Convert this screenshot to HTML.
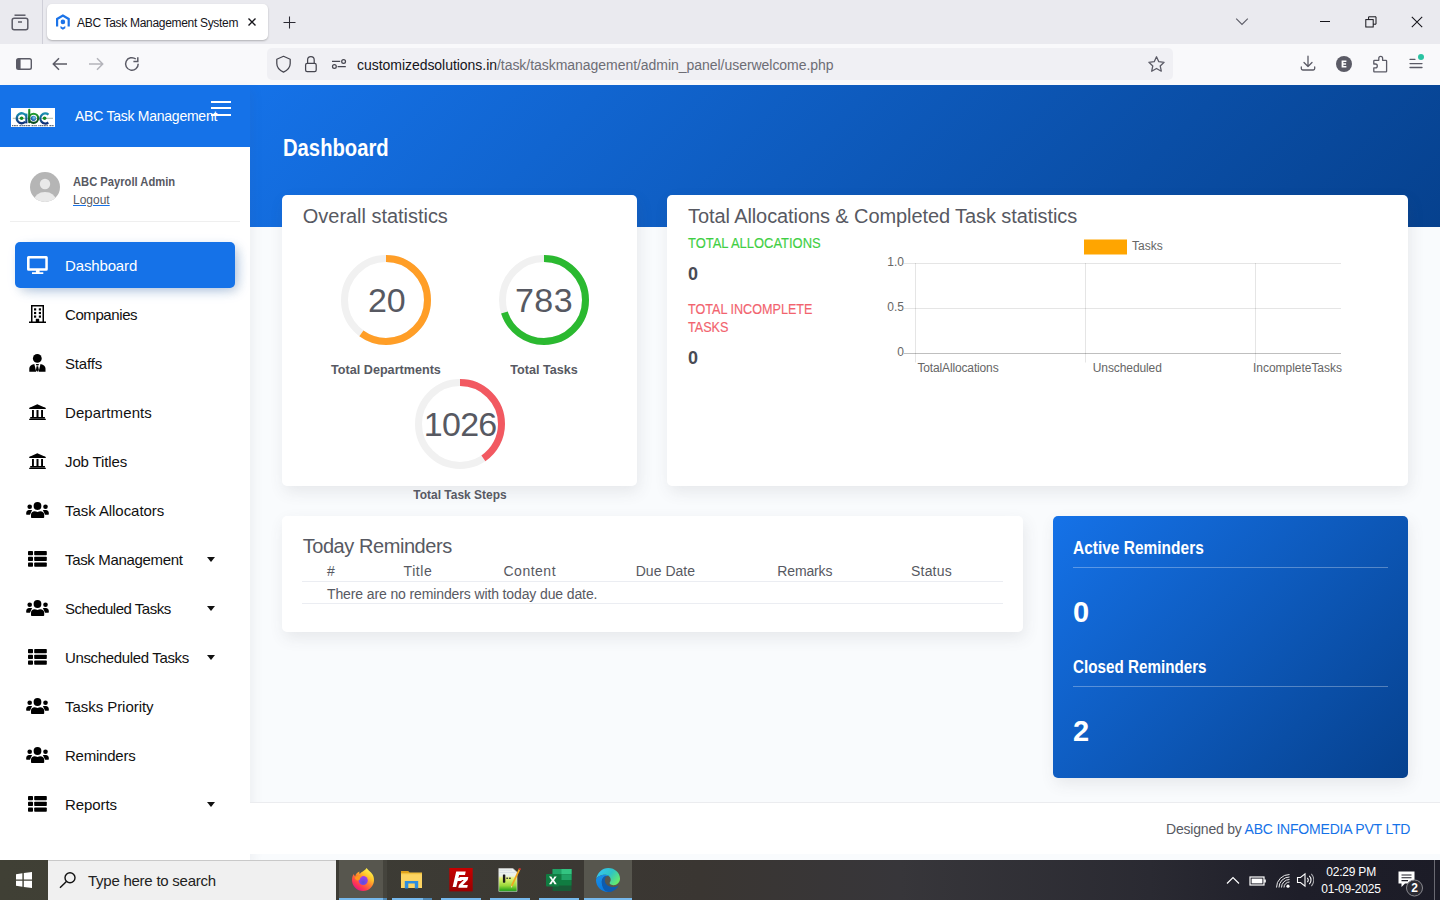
<!DOCTYPE html>
<html><head><meta charset="utf-8"><title>ABC Task Management System</title>
<style>
*{box-sizing:border-box;margin:0;padding:0}
html,body{width:1440px;height:900px;overflow:hidden;font-family:"Liberation Sans",sans-serif;background:#f9fbfd}
.abs{position:absolute}
svg{display:block}
/* browser chrome */
#tabbar{position:absolute;left:0;top:0;width:1440px;height:44px;background:#eaeaef}
#toolbar{position:absolute;left:0;top:44px;width:1440px;height:41px;background:#f9f9fb}
.tab{position:absolute;left:47px;top:4px;width:221px;height:36px;background:#fff;border-radius:5px;box-shadow:0 1px 2px rgba(0,0,0,.25)}
.tabtitle{position:absolute;left:77px;top:16px;font-size:12px;color:#15141a;white-space:nowrap;letter-spacing:-0.31px}
.urlbar{position:absolute;left:267px;top:48px;width:906px;height:32px;background:#f0f0f4;border-radius:5px}
.url{position:absolute;left:357px;top:57px;font-size:14px;color:#15141a;white-space:nowrap;letter-spacing:-0.04px}
.url span{color:#6d6d75}
/* page */
#page{position:absolute;left:0;top:85px;width:1440px;height:775px;background:#f9fbfd}
#sidebar{position:absolute;left:0;top:85px;width:250px;height:775px;background:#fff;box-shadow:4px 4px 10px rgba(69,65,78,.06)}
#logohdr{position:absolute;left:0;top:85px;width:250px;height:62px;background:#1572e8}
#panelhdr{position:absolute;left:250px;top:85px;width:1190px;height:142px;background:linear-gradient(-45deg,#06418e,#1572e8)}
.navi{position:absolute;left:0;width:250px;height:46px}
.navi .ic{position:absolute;left:26px;top:12px;width:22px;height:20px}
.navi .tx{position:absolute;left:65px;top:14px;font-size:15px;color:#111;white-space:nowrap;letter-spacing:-0.25px}
.navi .caret{position:absolute;left:206px;top:21px;width:0;height:0;border-left:5px solid transparent;border-right:5px solid transparent;border-top:5px solid #111}
.card{position:absolute;background:#fff;border-radius:5px;box-shadow:2px 6px 15px 0 rgba(69,65,78,.1)}
.ctitle{position:absolute;font-size:20px;color:#575962;white-space:nowrap;letter-spacing:-0.3px}
</style></head>
<body>
<!-- TAB BAR -->
<div id="tabbar"></div>
<div class="abs" style="left:42px;top:0;width:1px;height:44px;background:#cfcfd8"></div>
<svg class="abs" style="left:10px;top:12px" width="20" height="20" viewBox="0 0 20 20" fill="none" stroke="#5b5b66" stroke-width="1.5"><path d="M4.5 3.2h11"/><rect x="2.2" y="6.2" width="15.6" height="11.6" rx="2"/><path d="M8 10h4"/></svg>
<div class="tab"></div>
<svg class="abs" style="left:55px;top:13px" width="16" height="18" viewBox="0 0 16 18"><path d="M2.1 13.6V6L7.9 2.6L13.7 6V13.6" fill="none" stroke="#1b73e8" stroke-width="2.2"/><circle cx="7.9" cy="8.9" r="2.3" fill="#1b73e8"/><path d="M5.5 13.1L7.9 14.6L10.3 13.1V15.3L7.9 16.8L5.5 15.3Z" fill="#1b73e8"/></svg>
<div class="tabtitle">ABC Task Management System</div>
<svg class="abs" style="left:246px;top:16px" width="12" height="12" viewBox="0 0 12 12" stroke="#15141a" stroke-width="1.4"><path d="M2.5 2.5L9.5 9.5M9.5 2.5L2.5 9.5"/></svg>
<svg class="abs" style="left:282px;top:15px" width="15" height="15" viewBox="0 0 15 15" stroke="#2b2a33" stroke-width="1.05"><path d="M7.5 1.5v12M1.5 7.5h12"/></svg>
<svg class="abs" style="left:1234px;top:15px" width="16" height="12" viewBox="0 0 16 12" fill="none" stroke="#5b5b66" stroke-width="1.1"><path d="M2.2 3.6L8 9.4L13.8 3.6"/></svg>
<div class="abs" style="left:1320px;top:21px;width:10px;height:1px;background:#15141a"></div>
<svg class="abs" style="left:1365px;top:16px" width="12" height="12" viewBox="0 0 12 12" fill="none" stroke="#15141a" stroke-width="1"><rect x="0.8" y="3.6" width="7.4" height="7.4"/><path d="M3.6 3.6V0.8H11V8.2H8.2"/></svg>
<svg class="abs" style="left:1411px;top:16px" width="12" height="12" viewBox="0 0 12 12" stroke="#15141a" stroke-width="1.05"><path d="M0.8 0.8l10.4 10.4M11.2 0.8L0.8 11.2"/></svg>
<!-- TOOLBAR -->
<div id="toolbar"></div>
<svg class="abs" style="left:14px;top:55px" width="20" height="18" viewBox="0 0 20 18" fill="none"><rect x="2.7" y="3.7" width="14.6" height="10.6" rx="1.8" stroke="#5b5b66" stroke-width="1.4"/><rect x="3" y="4" width="3.6" height="10" fill="#5b5b66"/></svg>
<svg class="abs" style="left:50px;top:55px" width="20" height="18" viewBox="0 0 20 18" fill="none" stroke="#5b5b66" stroke-width="1.5"><path d="M17 9H3.5M9 3.3L3.3 9L9 14.7"/></svg>
<svg class="abs" style="left:86px;top:55px" width="20" height="18" viewBox="0 0 20 18" fill="none" stroke="#b4b4ba" stroke-width="1.5"><path d="M3 9h13.5M11 3.3L16.7 9L11 14.7"/></svg>
<svg class="abs" style="left:122px;top:54px" width="20" height="20" viewBox="0 0 20 20" fill="none" stroke="#5b5b66" stroke-width="1.5"><path d="M16.2 9.8A6.3 6.3 0 1 1 13.8 5"/><path d="M15.8 3.2v4.4h-4.4" stroke-linejoin="miter"/></svg>
<div class="urlbar"></div>
<svg class="abs" style="left:274px;top:55px" width="19" height="19" viewBox="0 0 19 19" fill="none" stroke="#45454f" stroke-width="1.25" stroke-linejoin="round"><path d="M9.5 1.3L16.2 4.2V8.5c0 3.8-2.8 6.8-6.7 8.6C5.6 15.3 2.8 12.3 2.8 8.5V4.2Z"/></svg>
<svg class="abs" style="left:302px;top:55px" width="18" height="19" viewBox="0 0 18 19" fill="none" stroke="#45454f" stroke-width="1.25"><rect x="3.6" y="8.3" width="10.6" height="8.3" rx="1.6"/><path d="M5.6 8.3V4.9a3.3 3.3 0 0 1 6.6 0v3.4"/></svg>
<svg class="abs" style="left:330px;top:56px" width="18" height="16" viewBox="0 0 18 16" fill="none" stroke="#45454f" stroke-width="1.25"><path d="M2 5.4h8.2M7.6 10.5h8.2"/><circle cx="13.6" cy="5.4" r="1.9"/><circle cx="4.4" cy="10.5" r="1.9"/></svg>
<div class="url">customizedsolutions.in<span>/task/taskmanagement/admin_panel/userwelcome.php</span></div>
<svg class="abs" style="left:1147px;top:55px" width="19" height="19" viewBox="0 0 19 19" fill="none" stroke="#5b5b66" stroke-width="1.3" stroke-linejoin="round"><path d="M9.5 1.8l2.3 4.9 5.3.6-3.9 3.6 1.1 5.3-4.8-2.7-4.8 2.7 1.1-5.3-3.9-3.6 5.3-.6Z"/></svg>
<svg class="abs" style="left:1299px;top:54px" width="18" height="18" viewBox="0 0 18 18" fill="none" stroke="#5b5b66" stroke-width="1.3" stroke-linecap="round" stroke-linejoin="round"><path d="M9 2.2v10.3M5 8.5l4 4 4-4M2.3 13v1.6a1.4 1.4 0 0 0 1.4 1.4h10.6a1.4 1.4 0 0 0 1.4-1.4V13"/></svg>
<svg class="abs" style="left:1335px;top:55px" width="18" height="18" viewBox="0 0 18 18"><circle cx="9" cy="9" r="8" fill="#5b5b66"/><path d="M6.6 5.4h4.8v1.6H8.4v1.2h2.7v1.5H8.4v1.3h3v1.6H6.6Z" fill="#fff"/></svg>
<svg class="abs" style="left:1372px;top:55px" width="17" height="18" viewBox="0 0 17 18" fill="none" stroke="#5b5b66" stroke-width="1.3" stroke-linejoin="round"><path d="M2.5 5.3h4.3V3.2a1.9 1.9 0 0 1 3.8 0v2.1h3.3c.5 0 .7.2.7.7v10.2c0 .5-.2.7-.7.7H2.5c-.5 0-.7-.2-.7-.7v-3.4h1.6a1.9 1.9 0 0 0 0-3.8H1.8V6c0-.5.2-.7.7-.7Z"/></svg>
<svg class="abs" style="left:1406px;top:52px" width="22" height="22" viewBox="0 0 22 22" fill="none" stroke="#5b5b66" stroke-width="1.3" stroke-linecap="round"><path d="M4 7.3h5M4 11.6h12M4 15.5h12"/><circle cx="15" cy="4.9" r="3" fill="#2ac3a2" stroke="none"/></svg>

<!-- PAGE -->
<div id="page"></div>
<div id="panelhdr"></div>
<div id="sidebar"></div>
<div id="logohdr"></div>
<!-- logo -->
<svg class="abs" style="left:11px;top:108px" width="44" height="19" viewBox="0 0 44 19"><defs><linearGradient id="lgt" x1="0" y1="0" x2="0" y2="1"><stop offset="0" stop-color="#1a8fb0"/><stop offset="1" stop-color="#0d2f78"/></linearGradient><linearGradient id="lgg" x1="0" y1="0" x2="0" y2="1"><stop offset="0" stop-color="#1e9a2e"/><stop offset="1" stop-color="#0c4a1e"/></linearGradient><radialGradient id="lgb" cx=".6" cy=".4" r=".6"><stop offset="0" stop-color="#7fd8f5"/><stop offset="1" stop-color="#0d4da0"/></radialGradient></defs>
<rect width="44" height="19" fill="#fff"/>
<path d="M1.8 10.3H42" stroke="#8a9a80" stroke-width="0.7"/>
<path d="M15.3 8.2A5 5 0 1 0 14.3 13.8" fill="none" stroke="url(#lgt)" stroke-width="2.3"/><rect x="14.3" y="5.6" width="2.1" height="9.8" fill="url(#lgt)"/>
<circle cx="10.6" cy="10.3" r="1.8" fill="#12891f"/>
<rect x="17.2" y="0.8" width="2.1" height="14.4" rx=".9" fill="url(#lgg)"/><circle cx="22.6" cy="10.3" r="4.6" fill="none" stroke="url(#lgg)" stroke-width="2.1"/>
<circle cx="22.5" cy="10.3" r="2.6" fill="url(#lgb)"/>
<path d="M37.5 6.6A5 5 0 1 0 37.3 14.5" fill="none" stroke="url(#lgt)" stroke-width="2.3"/>
<circle cx="33.6" cy="10.3" r="1.8" fill="#12891f"/>
<path d="M1 17.6H43" stroke="#2a3a50" stroke-width="1.2" stroke-dasharray="1.2 .6 2 .6 1.5 1.5 2 .5 1 .5 2 .6 1.5 .6 2 1.5 1.5 .5 1.2 .5 1.5 1.5 1.2 .5 1.5 .5" opacity=".75"/></svg>
<div class="abs" style="left:75px;top:109px;font-size:14px;line-height:1;color:#fff;white-space:nowrap;letter-spacing:-0.25px">ABC Task Management</div>
<div class="abs" style="left:211px;top:100.5px;width:20px;height:2px;background:#fff"></div>
<div class="abs" style="left:211px;top:106.8px;width:20px;height:2px;background:#fff"></div>
<div class="abs" style="left:211px;top:114px;width:20px;height:2px;background:#fff"></div>
<!-- user -->
<svg class="abs" style="left:30px;top:172px" width="30" height="30" viewBox="0 0 30 30"><defs><clipPath id="avc"><circle cx="15" cy="15" r="15"/></clipPath></defs><circle cx="15" cy="15" r="15" fill="#b5b5b5"/><g clip-path="url(#avc)" fill="#e9e9e9"><circle cx="15" cy="12" r="5.2"/><ellipse cx="15" cy="28.5" rx="11" ry="8.5"/></g></svg>
<div class="abs" style="left:73px;top:174.8px;font-size:13px;line-height:1;font-weight:bold;color:#575962;white-space:nowrap;transform:scaleX(0.86);transform-origin:0 0">ABC Payroll Admin</div>
<div class="abs" style="left:73px;top:194.1px;font-size:12px;line-height:1;color:#575962;white-space:nowrap;text-decoration:underline;text-decoration-color:#1572e8">Logout</div>
<div class="abs" style="left:10px;top:221px;width:230px;height:1px;background:#efefef"></div>
<!-- active nav -->
<div class="abs" style="left:15px;top:242px;width:220px;height:46px;background:#1572e8;border-radius:5px;box-shadow:4px 4px 10px 0 rgba(0,0,0,.1),4px 4px 15px -5px rgba(21,114,232,.4)"></div>
<svg class="abs" style="left:27px;top:256px" width="21" height="19" viewBox="0 0 21 19"><path fill="#fff" fill-rule="evenodd" d="M1.5 0h17.8A1.5 1.5 0 0 1 20.8 1.5V13.2A1.5 1.5 0 0 1 19.3 14.7H12.6V16.3H16.3V18H5V16.3H8.9V14.7H1.5A1.5 1.5 0 0 1 0 13.2V1.5A1.5 1.5 0 0 1 1.5 0ZM2.6 2.6V12.3H18.3V2.6Z"/></svg>
<div class="abs" style="left:65px;top:257.9px;font-size:15px;line-height:1;color:#fff;white-space:nowrap;letter-spacing:-0.14px">Dashboard</div>
<svg class="abs" style="left:29px;top:305px" width="17" height="18" viewBox="0 0 17 18"><path fill="#000" fill-rule="evenodd" d="M2 0h13v16.6h2V18H0v-1.4h2ZM3.5 1.5v15.1h3.3v-2.8h3.4v2.8h3.3V1.5Z"/><g fill="#000"><rect x="5" y="3.3" width="2.2" height="2.2"/><rect x="9.8" y="3.3" width="2.2" height="2.2"/><rect x="5" y="6.9" width="2.2" height="2.2"/><rect x="9.8" y="6.9" width="2.2" height="2.2"/><rect x="5" y="10.5" width="2.2" height="2.2"/><rect x="9.8" y="10.5" width="2.2" height="2.2"/></g></svg>
<div class="abs" style="left:65px;top:306.9px;font-size:15px;line-height:1;color:#111;white-space:nowrap;letter-spacing:-0.41px">Companies</div>
<svg class="abs" style="left:29px;top:354px" width="17" height="18" viewBox="0 0 17 18"><g fill="#000"><circle cx="8.3" cy="4.4" r="4.4"/><path d="M0.3 17.8V14.6C0.3 12.3 2.2 10.4 4.6 10.2L5.3 10.1L7.2 17.8Z"/><path d="M16.5 17.8V14.6C16.5 12.3 14.6 10.4 12.2 10.2L11.5 10.1L9.6 17.8Z"/><path d="M6.8 10.1H10L9.3 11.6H7.5Z"/><path d="M7.6 12.2H9.2L9.9 16.3L8.4 17.8L6.9 16.3Z"/></g></svg>
<div class="abs" style="left:65px;top:355.9px;font-size:15px;line-height:1;color:#111;white-space:nowrap;letter-spacing:-0.18px">Staffs</div>
<svg class="abs" style="left:28px;top:404px" width="18" height="17" viewBox="0 0 18 17"><path fill="#000" d="M9.3 0.2L15.5 3C16.8 3.3 17.8 3.8 17.8 4.6V4.9H1.2V4.6C1.2 3.8 2 3.3 3.3 3ZM4 6H5.9V13H4ZM8.5 6H10.5V13H8.5ZM13.1 6H15V13H13.1ZM2.2 13H16.9V14.6H2.2ZM1.2 14.7H17.8V16H1.2Z"/></svg>
<div class="abs" style="left:65px;top:404.9px;font-size:15px;line-height:1;color:#111;white-space:nowrap;letter-spacing:0.1px">Departments</div>
<svg class="abs" style="left:28px;top:453px" width="18" height="17" viewBox="0 0 18 17"><path fill="#000" d="M9.3 0.2L15.5 3C16.8 3.3 17.8 3.8 17.8 4.6V4.9H1.2V4.6C1.2 3.8 2 3.3 3.3 3ZM4 6H5.9V13H4ZM8.5 6H10.5V13H8.5ZM13.1 6H15V13H13.1ZM2.2 13H16.9V14.6H2.2ZM1.2 14.7H17.8V16H1.2Z"/></svg>
<div class="abs" style="left:65px;top:453.9px;font-size:15px;line-height:1;color:#111;white-space:nowrap;letter-spacing:-0.12px">Job Titles</div>
<svg class="abs" style="left:26px;top:502px" width="23" height="16" viewBox="0 0 23 16"><g fill="#000"><circle cx="11.5" cy="4" r="3.9"/><circle cx="3.7" cy="4.8" r="2.3"/><circle cx="19.5" cy="4.8" r="2.3"/><path d="M5 15.2V12.8C5 10.8 6.6 9.3 8.6 9.3L10 9.6C10.5 9.8 11 10 11.5 10C12 10 12.5 9.8 13 9.6L14.4 9.3C16.4 9.3 18.2 10.8 18.2 12.8V15.2C18.2 15.7 17.9 16 17.4 16H5.8C5.3 16 5 15.7 5 15.2Z"/><path d="M0.2 11.9V11C0.2 9.4 1.4 8 3 8H6.1L4 12.8H1.1C0.5 12.8 0.2 12.4 0.2 11.9Z"/><path d="M22.8 11.9V11C22.8 9.4 21.6 8 20 8H16.9L19 12.8H21.9C22.5 12.8 22.8 12.4 22.8 11.9Z"/></g></svg>
<div class="abs" style="left:65px;top:502.9px;font-size:15px;line-height:1;color:#111;white-space:nowrap;letter-spacing:-0.06px">Task Allocators</div>
<svg class="abs" style="left:28px;top:551px" width="19" height="16" viewBox="0 0 19 16"><g fill="#000"><rect x="0" y="0" width="5" height="4.3" rx=".8"/><rect x="6.2" y="0" width="12.6" height="4.3" rx=".8"/><rect x="0" y="5.7" width="5" height="4.3" rx=".8"/><rect x="6.2" y="5.7" width="12.6" height="4.3" rx=".8"/><rect x="0" y="11.4" width="5" height="4.3" rx=".8"/><rect x="6.2" y="11.4" width="12.6" height="4.3" rx=".8"/></g></svg>
<div class="abs" style="left:65px;top:551.9px;font-size:15px;line-height:1;color:#111;white-space:nowrap;letter-spacing:-0.33px">Task Management</div>
<div class="abs" style="left:206.5px;top:557px;width:0;height:0;border-left:4.5px solid transparent;border-right:4.5px solid transparent;border-top:5px solid #111"></div>
<svg class="abs" style="left:26px;top:600px" width="23" height="16" viewBox="0 0 23 16"><g fill="#000"><circle cx="11.5" cy="4" r="3.9"/><circle cx="3.7" cy="4.8" r="2.3"/><circle cx="19.5" cy="4.8" r="2.3"/><path d="M5 15.2V12.8C5 10.8 6.6 9.3 8.6 9.3L10 9.6C10.5 9.8 11 10 11.5 10C12 10 12.5 9.8 13 9.6L14.4 9.3C16.4 9.3 18.2 10.8 18.2 12.8V15.2C18.2 15.7 17.9 16 17.4 16H5.8C5.3 16 5 15.7 5 15.2Z"/><path d="M0.2 11.9V11C0.2 9.4 1.4 8 3 8H6.1L4 12.8H1.1C0.5 12.8 0.2 12.4 0.2 11.9Z"/><path d="M22.8 11.9V11C22.8 9.4 21.6 8 20 8H16.9L19 12.8H21.9C22.5 12.8 22.8 12.4 22.8 11.9Z"/></g></svg>
<div class="abs" style="left:65px;top:600.9px;font-size:15px;line-height:1;color:#111;white-space:nowrap;letter-spacing:-0.5px">Scheduled Tasks</div>
<div class="abs" style="left:206.5px;top:606px;width:0;height:0;border-left:4.5px solid transparent;border-right:4.5px solid transparent;border-top:5px solid #111"></div>
<svg class="abs" style="left:28px;top:649px" width="19" height="16" viewBox="0 0 19 16"><g fill="#000"><rect x="0" y="0" width="5" height="4.3" rx=".8"/><rect x="6.2" y="0" width="12.6" height="4.3" rx=".8"/><rect x="0" y="5.7" width="5" height="4.3" rx=".8"/><rect x="6.2" y="5.7" width="12.6" height="4.3" rx=".8"/><rect x="0" y="11.4" width="5" height="4.3" rx=".8"/><rect x="6.2" y="11.4" width="12.6" height="4.3" rx=".8"/></g></svg>
<div class="abs" style="left:65px;top:649.9px;font-size:15px;line-height:1;color:#111;white-space:nowrap;letter-spacing:-0.35px">Unscheduled Tasks</div>
<div class="abs" style="left:206.5px;top:655px;width:0;height:0;border-left:4.5px solid transparent;border-right:4.5px solid transparent;border-top:5px solid #111"></div>
<svg class="abs" style="left:26px;top:698px" width="23" height="16" viewBox="0 0 23 16"><g fill="#000"><circle cx="11.5" cy="4" r="3.9"/><circle cx="3.7" cy="4.8" r="2.3"/><circle cx="19.5" cy="4.8" r="2.3"/><path d="M5 15.2V12.8C5 10.8 6.6 9.3 8.6 9.3L10 9.6C10.5 9.8 11 10 11.5 10C12 10 12.5 9.8 13 9.6L14.4 9.3C16.4 9.3 18.2 10.8 18.2 12.8V15.2C18.2 15.7 17.9 16 17.4 16H5.8C5.3 16 5 15.7 5 15.2Z"/><path d="M0.2 11.9V11C0.2 9.4 1.4 8 3 8H6.1L4 12.8H1.1C0.5 12.8 0.2 12.4 0.2 11.9Z"/><path d="M22.8 11.9V11C22.8 9.4 21.6 8 20 8H16.9L19 12.8H21.9C22.5 12.8 22.8 12.4 22.8 11.9Z"/></g></svg>
<div class="abs" style="left:65px;top:698.9px;font-size:15px;line-height:1;color:#111;white-space:nowrap;letter-spacing:-0.05px">Tasks Priority</div>
<svg class="abs" style="left:26px;top:747px" width="23" height="16" viewBox="0 0 23 16"><g fill="#000"><circle cx="11.5" cy="4" r="3.9"/><circle cx="3.7" cy="4.8" r="2.3"/><circle cx="19.5" cy="4.8" r="2.3"/><path d="M5 15.2V12.8C5 10.8 6.6 9.3 8.6 9.3L10 9.6C10.5 9.8 11 10 11.5 10C12 10 12.5 9.8 13 9.6L14.4 9.3C16.4 9.3 18.2 10.8 18.2 12.8V15.2C18.2 15.7 17.9 16 17.4 16H5.8C5.3 16 5 15.7 5 15.2Z"/><path d="M0.2 11.9V11C0.2 9.4 1.4 8 3 8H6.1L4 12.8H1.1C0.5 12.8 0.2 12.4 0.2 11.9Z"/><path d="M22.8 11.9V11C22.8 9.4 21.6 8 20 8H16.9L19 12.8H21.9C22.5 12.8 22.8 12.4 22.8 11.9Z"/></g></svg>
<div class="abs" style="left:65px;top:747.9px;font-size:15px;line-height:1;color:#111;white-space:nowrap;letter-spacing:-0.22px">Reminders</div>
<svg class="abs" style="left:28px;top:796px" width="19" height="16" viewBox="0 0 19 16"><g fill="#000"><rect x="0" y="0" width="5" height="4.3" rx=".8"/><rect x="6.2" y="0" width="12.6" height="4.3" rx=".8"/><rect x="0" y="5.7" width="5" height="4.3" rx=".8"/><rect x="6.2" y="5.7" width="12.6" height="4.3" rx=".8"/><rect x="0" y="11.4" width="5" height="4.3" rx=".8"/><rect x="6.2" y="11.4" width="12.6" height="4.3" rx=".8"/></g></svg>
<div class="abs" style="left:65px;top:796.9px;font-size:15px;line-height:1;color:#111;white-space:nowrap;letter-spacing:-0.08px">Reports</div>
<div class="abs" style="left:206.5px;top:802px;width:0;height:0;border-left:4.5px solid transparent;border-right:4.5px solid transparent;border-top:5px solid #111"></div>

<!-- MAIN -->
<div class="abs" style="left:283.3px;top:137.3px;font-size:23px;line-height:1;color:#fff;white-space:nowrap;font-weight:bold;transform:scaleX(0.88);transform-origin:0 0">Dashboard</div>
<div class="card" style="left:282px;top:195px;width:355px;height:291px"></div>
<div class="abs" style="left:302.8px;top:206.0px;font-size:20px;line-height:1;color:#575962;white-space:nowrap;letter-spacing:-0.03px">Overall statistics</div>
<svg class="abs" style="left:341px;top:255px" width="90" height="90" viewBox="0 0 90 90"><circle cx="45" cy="45" r="41.5" fill="none" stroke="#f1f1f1" stroke-width="7"/><circle cx="45" cy="45" r="41.5" fill="none" stroke="#FF9E27" stroke-width="7" stroke-dasharray="156.45 260.75" transform="rotate(-90 45 45)"/></svg>
<svg class="abs" style="left:499px;top:255px" width="90" height="90" viewBox="0 0 90 90"><circle cx="45" cy="45" r="41.5" fill="none" stroke="#f1f1f1" stroke-width="7"/><circle cx="45" cy="45" r="41.5" fill="none" stroke="#2BB930" stroke-width="7" stroke-dasharray="182.53 260.75" transform="rotate(-90 45 45)"/></svg>
<svg class="abs" style="left:415px;top:379px" width="90" height="90" viewBox="0 0 90 90"><circle cx="45" cy="45" r="41.5" fill="none" stroke="#f1f1f1" stroke-width="7"/><circle cx="45" cy="45" r="41.5" fill="none" stroke="#F25961" stroke-width="7" stroke-dasharray="105.34 260.75" transform="rotate(-90 45 45)"/></svg>
<div class="abs" style="left:386.7px;top:283.3px;width:300px;margin-left:-150px;text-align:center;font-size:34px;line-height:1;color:#575962;white-space:nowrap;letter-spacing:-0.3px">20</div>
<div class="abs" style="left:544px;top:283.3px;width:300px;margin-left:-150px;text-align:center;font-size:34px;line-height:1;color:#575962;white-space:nowrap;letter-spacing:0.5px">783</div>
<div class="abs" style="left:460.2px;top:407.4px;width:300px;margin-left:-150px;text-align:center;font-size:34px;line-height:1;color:#575962;white-space:nowrap;letter-spacing:-0.75px">1026</div>
<div class="abs" style="left:386.2px;top:363.4px;width:300px;margin-left:-150px;text-align:center;font-size:13px;line-height:1;color:#575962;white-space:nowrap;font-weight:bold;transform:scaleX(0.97);transform-origin:50% 0">Total Departments</div>
<div class="abs" style="left:543.5px;top:363.4px;width:300px;margin-left:-150px;text-align:center;font-size:13px;line-height:1;color:#575962;white-space:nowrap;font-weight:bold;transform:scaleX(0.97);transform-origin:50% 0">Total Tasks</div>
<div class="abs" style="left:460.0px;top:488.4px;width:300px;margin-left:-150px;text-align:center;font-size:13px;line-height:1;color:#575962;white-space:nowrap;font-weight:bold;transform:scaleX(0.92);transform-origin:50% 0">Total Task Steps</div>
<div class="card" style="left:667px;top:195px;width:741px;height:291px"></div>
<div class="abs" style="left:688.0px;top:205.8px;font-size:20px;line-height:1;color:#575962;white-space:nowrap;letter-spacing:-0.09px">Total Allocations &amp; Completed Task statistics</div>
<div class="abs" style="left:688.0px;top:235.8px;font-size:14px;line-height:1;color:#3fcf44;white-space:nowrap;transform:scaleX(0.925);transform-origin:0 0;-webkit-text-stroke:0.15px #3fcf44">TOTAL ALLOCATIONS</div>
<div class="abs" style="left:688.0px;top:264.6px;font-size:18px;line-height:1;color:#494b54;white-space:nowrap;font-weight:bold">0</div>
<div class="abs" style="left:688.0px;top:301.8px;font-size:14px;line-height:1;color:#f2636e;white-space:nowrap;transform:scaleX(0.9);transform-origin:0 0;-webkit-text-stroke:0.15px #f2636e">TOTAL INCOMPLETE</div>
<div class="abs" style="left:688.0px;top:319.8px;font-size:14px;line-height:1;color:#f2636e;white-space:nowrap;transform:scaleX(0.9);transform-origin:0 0;-webkit-text-stroke:0.15px #f2636e">TASKS</div>
<div class="abs" style="left:688.0px;top:349.0px;font-size:18px;line-height:1;color:#494b54;white-space:nowrap;font-weight:bold">0</div>
<svg class="abs" style="left:860px;top:230px" width="500" height="150" viewBox="860 230 500 150" font-family="Liberation Sans" font-size="12" fill="#666">
<rect x="1084" y="239.5" width="43" height="15" fill="#FFA500"/>
<text x="1132" y="250">Tasks</text>
<g stroke="rgba(0,0,0,0.1)" stroke-width="1">
<path d="M904 263.5H1341M904 308.5H1341"/>
<path d="M915.5 263V362.5M1085.5 263V362.5M1255.5 263V362.5"/>
</g>
<path d="M904 353.5H1341" stroke="rgba(0,0,0,0.25)" stroke-width="1"/>
<text x="904" y="266" text-anchor="end">1.0</text>
<text x="904" y="311" text-anchor="end">0.5</text>
<text x="904" y="356" text-anchor="end">0</text>
<text x="917.5" y="372" letter-spacing="-0.15">TotalAllocations</text>
<text x="1092.8" y="372" letter-spacing="-0.1">Unscheduled</text>
<text x="1253" y="372" letter-spacing="-0.03">IncompleteTasks</text>
</svg>
<div class="card" style="left:282px;top:516px;width:741px;height:116px"></div>
<div class="abs" style="left:302.7px;top:535.6px;font-size:20px;line-height:1;color:#575962;white-space:nowrap;letter-spacing:-0.44px">Today Reminders</div>
<div class="abs" style="left:327.0px;top:564.3px;font-size:14px;line-height:1;color:#575962;white-space:nowrap">#</div>
<div class="abs" style="left:403.5px;top:564.3px;font-size:14px;line-height:1;color:#575962;white-space:nowrap;letter-spacing:0.6px">Title</div>
<div class="abs" style="left:503.5px;top:564.3px;font-size:14px;line-height:1;color:#575962;white-space:nowrap;letter-spacing:0.5px">Content</div>
<div class="abs" style="left:635.7px;top:564.3px;font-size:14px;line-height:1;color:#575962;white-space:nowrap;letter-spacing:0.03px">Due Date</div>
<div class="abs" style="left:777.3px;top:564.3px;font-size:14px;line-height:1;color:#575962;white-space:nowrap;letter-spacing:-0.15px">Remarks</div>
<div class="abs" style="left:911px;top:564.3px;font-size:14px;line-height:1;color:#575962;white-space:nowrap;letter-spacing:0.2px">Status</div>
<div class="abs" style="left:302px;top:581px;width:701px;height:1px;background:#ebedf2"></div>
<div class="abs" style="left:327.0px;top:586.8px;font-size:14px;line-height:1;color:#575962;white-space:nowrap;letter-spacing:-0.12px">There are no reminders with today due date.</div>
<div class="abs" style="left:302px;top:603px;width:701px;height:1px;background:#ebedf2"></div>
<div class="card" style="left:1053px;top:516px;width:355px;height:262px;background:linear-gradient(-45deg,#06418e,#1572e8)"></div>
<div class="abs" style="left:1073.0px;top:538.8px;font-size:18px;line-height:1;color:#fff;white-space:nowrap;font-weight:bold;transform:scaleX(0.86);transform-origin:0 0">Active Reminders</div>
<div class="abs" style="left:1073px;top:567px;width:315px;height:1px;background:rgba(255,255,255,.3)"></div>
<div class="abs" style="left:1073.0px;top:597.5px;font-size:29px;line-height:1;color:#fff;white-space:nowrap;font-weight:bold">0</div>
<div class="abs" style="left:1073.0px;top:658.0px;font-size:18px;line-height:1;color:#fff;white-space:nowrap;font-weight:bold;transform:scaleX(0.845);transform-origin:0 0">Closed Reminders</div>
<div class="abs" style="left:1073px;top:686px;width:315px;height:1px;background:rgba(255,255,255,.3)"></div>
<div class="abs" style="left:1073.0px;top:716.5px;font-size:29px;line-height:1;color:#fff;white-space:nowrap;font-weight:bold">2</div>
<div class="abs" style="left:250px;top:802px;width:1190px;height:52px;background:#fff;border-top:1px solid #ebecef"></div>
<div class="abs" style="left:1166.0px;top:822.1px;font-size:14px;line-height:1;color:#575962;white-space:nowrap;letter-spacing:-0.2px">Designed by <span style="color:#1572e8">ABC INFOMEDIA PVT LTD</span></div>

<!-- TASKBAR -->
<div class="abs" style="left:0;top:860px;width:1440px;height:40px;background:linear-gradient(90deg,#404035 0px,#3d3c35 340px,#3a3632 700px,#37363a 900px,#2a2a32 1150px,#1e1e29 1300px,#1c1c27 1440px)"></div>
<svg class="abs" style="left:15px;top:871px" width="18" height="18" viewBox="0 0 18 18" fill="#fff"><path d="M1 3.2L7.4 2.3V8.4H1ZM8.8 2.1L17 .9V8.4H8.8ZM1 9.7H7.4V15.7L1 14.8ZM8.8 9.7H17V17.1L8.8 15.9Z"/></svg>
<div class="abs" style="left:48px;top:860px;width:288px;height:40px;background:#f0f0f0;border-top:1px solid #c9c9c9"></div>
<svg class="abs" style="left:59px;top:871px" width="18" height="18" viewBox="0 0 18 18" fill="none" stroke="#111" stroke-width="1.4"><circle cx="11" cy="6.8" r="5"/><path d="M7.4 10.4L1 16.8"/></svg>
<div class="abs" style="left:88px;top:873px;font-size:15px;line-height:1;color:#222;white-space:nowrap;letter-spacing:-0.25px">Type here to search</div>
<!-- firefox -->
<div class="abs" style="left:339px;top:860px;width:44px;height:40px;background:#57564e"></div>
<div class="abs" style="left:383px;top:860px;width:4px;height:40px;background:#45443d"></div>
<div class="abs" style="left:339px;top:898px;width:44px;height:2px;background:#76b9ed"></div>
<div class="abs" style="left:383px;top:898px;width:4px;height:2px;background:#4f87b3"></div>
<svg class="abs" style="left:351px;top:867px" width="24" height="25" viewBox="0 0 24 25"><defs><linearGradient id="ffg" x1="0.85" y1="0.1" x2="0.25" y2="0.95"><stop offset="0" stop-color="#fff44f"/><stop offset=".3" stop-color="#ffc22a"/><stop offset=".55" stop-color="#ff7a30"/><stop offset=".8" stop-color="#ff3a50"/><stop offset="1" stop-color="#e8177f"/></linearGradient><radialGradient id="ffp" cx="0.5" cy="0.7" r=".7"><stop offset="0" stop-color="#5a4fd8"/><stop offset="1" stop-color="#a63cf0"/></radialGradient></defs>
<path d="M15.5 1c1.5 2 3 3 4.5 4.5 2.2 2.3 3 4.8 3 7.5A11 11 0 0 1 1 13c0-2.2.6-4.3 1.8-6 .2 1.2.8 1.8 1.4 2.2.6-2.3 2.2-4 4.3-4.6-.4 1.2-.2 2 .4 2.4C10 4.5 13.5 4.5 15.5 1Z" fill="url(#ffg)"/>
<circle cx="12.2" cy="13.5" r="4.6" fill="url(#ffp)"/>
<path d="M3.6 10.8c1.5-1.8 5.5-2.8 7.9-1.2-1.6.4-2.4 1.3-2.4 2.2-.2 1-1 1.4-2 1.6-1.4.2-2.6-.5-3.5-2.6Z" fill="#ff9a1a" opacity=".95"/></svg>
<!-- explorer -->
<div class="abs" style="left:392px;top:898px;width:31px;height:2px;background:#76b9ed"></div>
<div class="abs" style="left:423px;top:898px;width:9px;height:2px;background:#4f87b3"></div>
<svg class="abs" style="left:400px;top:870px" width="23" height="19" viewBox="0 0 23 19"><path d="M1 1h7l1.5 1.5H22V18H1Z" fill="#f0c040"/><path d="M1 4.2h21V18H1Z" fill="#fcd462"/><path d="M1 1h6.8l1.6 2H1Z" fill="#e0a21c"/><path d="M4.8 11h13.4v7.4h-3.4v-5H8.3v5H4.8Z" fill="#2d8ee0"/></svg>
<!-- filezilla -->
<div class="abs" style="left:441px;top:898px;width:40px;height:2px;background:#76b9ed"></div>
<svg class="abs" style="left:449px;top:868px" width="24" height="24" viewBox="0 0 24 24"><defs><linearGradient id="fzg" x1="0" y1="0" x2="0" y2="1"><stop offset="0" stop-color="#c80000"/><stop offset="1" stop-color="#9a0000"/></linearGradient></defs><rect x="0.3" y="0" width="23.4" height="23.4" fill="url(#fzg)"/><path d="M7.2 3.6H16.7L16 6.9H10.1L9.4 9.9H13.2L12.5 12.9H8.7L7.2 18.9H3.6Z" fill="#fff"/><path d="M10.6 9H19.3L18.7 11.9L13.8 16.9H18.8L18.2 19.8H9.3L9.9 17L14.8 11.9H10Z" fill="#fff"/></svg>
<!-- notepad++ -->
<div class="abs" style="left:490px;top:898px;width:40px;height:2px;background:#76b9ed"></div>
<svg class="abs" style="left:498px;top:868px" width="24" height="24" viewBox="0 0 24 24"><defs><linearGradient id="npg" x1="0" y1="0" x2="0" y2="1"><stop offset="0" stop-color="#f4f7f4"/><stop offset=".33" stop-color="#e8f0e8"/><stop offset=".42" stop-color="#e8f57a"/><stop offset=".75" stop-color="#9ad83a"/><stop offset="1" stop-color="#139a13"/></linearGradient></defs><path d="M0.8 0.4H14.8L19 4.2V23.4H0.8Z" fill="url(#npg)" stroke="#d8d8d8" stroke-width=".6"/><path d="M1.5 2.2H14M1.5 4.4H17.5" stroke="#cfd8df" stroke-width=".8"/><rect x="4.9" y="6.5" width="2.4" height="8.2" rx=".6" fill="#1a1a1a"/><rect x="8.3" y="9.6" width="1.8" height="1.3" fill="#333"/><rect x="11" y="9.6" width="1.8" height="1.3" fill="#333"/><path d="M20.9 0.6L22.4 1.6L14.4 18.4L12.9 17.4Z" fill="#f0a820"/><path d="M12.9 17.4L14.4 18.4L13.2 20Z" fill="#e8d0a8"/><circle cx="21.8" cy="1.1" r="1.1" fill="#d03030"/></svg>
<!-- excel -->
<div class="abs" style="left:539px;top:898px;width:40px;height:2px;background:#76b9ed"></div>
<svg class="abs" style="left:546px;top:869px" width="26" height="22" viewBox="0 0 26 22"><rect x="6.5" y="0" width="19" height="22" rx="1" fill="#185c37"/><rect x="6.5" y="0" width="19" height="5.5" fill="#21a366"/><rect x="15.5" y="0" width="10" height="5.5" fill="#33c481"/><rect x="6.5" y="5.5" width="19" height="5.5" fill="#107c41"/><rect x="15.5" y="5.5" width="10" height="5.5" fill="#21a366"/><rect x="6.5" y="11" width="19" height="5.5" fill="#107c41"/><rect x="0" y="5" width="13" height="12.5" rx="1" fill="#107c41"/><path d="M3 7.5h2.3l1.6 2.8 1.6-2.8h2.2L8.1 11.2l2.7 4h-2.3L6.9 12.4 5.3 15.2H3l2.7-4Z" fill="#fff"/></svg>
<!-- edge -->
<div class="abs" style="left:584px;top:860px;width:48px;height:40px;background:#57564e"></div>
<div class="abs" style="left:584px;top:898px;width:48px;height:2px;background:#76b9ed"></div>
<svg class="abs" style="left:596px;top:868px" width="24" height="24" viewBox="0 0 24 24"><defs><linearGradient id="edg1" x1="0" y1="0.2" x2="1" y2="0.8"><stop offset="0" stop-color="#35c5f5"/><stop offset=".5" stop-color="#2fc4c4"/><stop offset="1" stop-color="#6ef060"/></linearGradient><linearGradient id="edg2" x1="0" y1="0" x2="0.3" y2="1"><stop offset="0" stop-color="#1a90e6"/><stop offset="1" stop-color="#0a7ae0"/></linearGradient></defs>
<path d="M0.2 11C1.2 4.8 6.3 0 12.3 0 19 0 24 5 24 10.6 24 14.6 21 17.2 17.6 17.2 15.6 17.2 13.6 16.4 13.6 15 13.6 14.5 14 14 14.3 13.5 14.6 13 14.7 12.4 14.7 11.8 14.7 9 12.3 6.8 9 6.8 5 6.8 1.4 8.6 0.2 11Z" fill="url(#edg1)"/>
<path d="M0.2 11C1.4 8.6 5 6.8 9 6.8 11 6.8 12.6 7.5 13.6 8.5 12.8 8.1 12 8 11 8 7.6 8 5.8 11 5.8 14 5.8 18.5 9.2 22.6 13.8 23.8 13.3 23.9 12.8 24 12.2 24 5.4 24 0 18.6 0 12Z" fill="url(#edg2)"/>
<path d="M5.8 14C5.8 11 7.6 8 11 8 9.6 9 8.8 10.4 8.8 12.2 8.8 16.5 12.8 19 16.8 19 19 19 21 18.3 22.6 17.4 20.6 21.4 16.8 24 12.2 24 8.2 23.4 5.8 19 5.8 14Z" fill="#0d5bb0"/></svg>
<!-- tray -->
<svg class="abs" style="left:1225px;top:874px" width="16" height="12" viewBox="0 0 16 12" fill="none" stroke="#fff" stroke-width="1.2"><path d="M2 9.5L8 3.5L14 9.5"/></svg>
<svg class="abs" style="left:1249px;top:875px" width="18" height="12" viewBox="0 0 18 12" fill="none" stroke="#fff" stroke-width="1.2"><rect x="1" y="2" width="14" height="8"/><rect x="2.6" y="3.6" width="10.8" height="4.8" fill="#fff" stroke="none"/><rect x="15.2" y="4.5" width="1.6" height="3" fill="#fff" stroke="none"/></svg>
<svg class="abs" style="left:1275px;top:873px" width="16" height="16" viewBox="0 0 16 16" fill="none" stroke="#fff" stroke-width="1"><path d="M1.5 14.5A13 13 0 0 1 14.5 1.5M4 14.5A10.5 10.5 0 0 1 14.5 4M6.5 14.5A8 8 0 0 1 14.5 6.5M9 14.5A5.5 5.5 0 0 1 14.5 9" opacity=".9"/><circle cx="13" cy="13.2" r="1.6" fill="#fff" stroke="none"/></svg>
<svg class="abs" style="left:1296px;top:872px" width="18" height="16" viewBox="0 0 18 16" fill="none" stroke="#fff" stroke-width="1.1"><path d="M1.5 5.5H4.5L9 1.8V14.2L4.5 10.5H1.5Z"/><path d="M11.3 5.8a3 3 0 0 1 0 4.4M13.3 3.8a6 6 0 0 1 0 8.4" /><path d="M15.3 1.8a9 9 0 0 1 0 12.4" opacity=".6"/></svg>
<div class="abs" style="left:1317px;top:864px;width:68px;text-align:center;font-size:12px;line-height:17px;color:#fff;white-space:nowrap;letter-spacing:-0.2px;text-indent:0.2px">02:29 PM<br>01-09-2025</div>
<svg class="abs" style="left:1397px;top:870px" width="28" height="28" viewBox="0 0 28 28"><path d="M1.5 1.5H17.5V13.5H8L4.5 17V13.5H1.5Z" fill="#fff"/><path d="M4.5 5H14.5M4.5 7.8H14.5M4.5 10.6H11" stroke="#1f1f29" stroke-width="1.1"/><circle cx="17.5" cy="18" r="8" fill="#2b2b33" stroke="#8a8a90" stroke-width="1"/><text x="17.5" y="22.2" text-anchor="middle" font-family="Liberation Sans" font-weight="bold" font-size="12" fill="#fff">2</text></svg>
<div class="abs" style="left:1434px;top:860px;width:1px;height:40px;background:#6a6a72"></div>
</body></html>
